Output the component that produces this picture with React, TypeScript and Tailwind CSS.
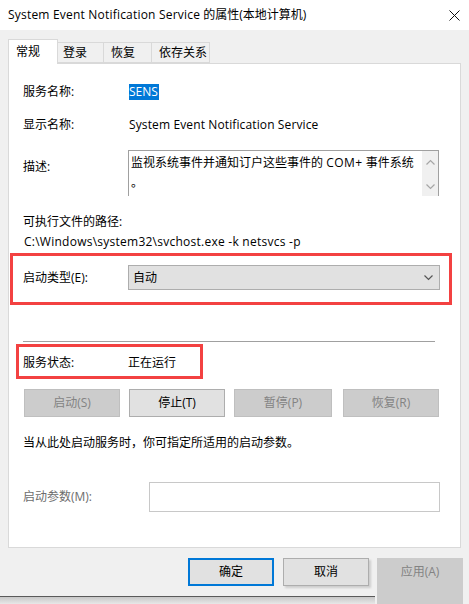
import React from "react";

const font = "font-['Open_Sans','Noto_Sans_CJK_SC',sans-serif]";

function Chevron({ up }: { up?: boolean }) {
  return (
    <svg width="9" height="6" viewBox="0 0 9 6" className="block">
      <path d={up ? "M0.5 5.5 L4.5 1.5 L8.5 5.5" : "M0.5 0.5 L4.5 4.5 L8.5 0.5"} fill="none" stroke="currentColor" strokeWidth="1.2" />
    </svg>
  );
}

function ServiceButton({ label, enabled, className }: { label: string; enabled?: boolean; className: string }) {
  return (
    <div
      className={
        "flex h-[28px] items-center justify-center border text-[12px] " +
        (enabled ? "border-[#adadad] bg-[#e1e1e1] text-black " : "border-[#bfbfbf] bg-[#cccccc] text-[#838383] ") +
        className
      }
    >
      {label}
    </div>
  );
}

export default function App() {
  return (
    <div className={`relative h-[604px] w-[469px] overflow-hidden bg-[#f0f0f0] text-[12px] leading-[16px] text-black ${font}`}>
      {/* title bar */}
      <div className="flex h-[30px] items-center justify-between bg-white pl-[8px] pr-[9px]">
        <span className="text-[12px]">
          <span className="tracking-[0.2px]">System Event Notification Service</span> 的属性(本地计算机)
        </span>
        <svg width="11" height="11" viewBox="0 0 11 11">
          <path d="M0.5 0.5 L10.5 10.5 M10.5 0.5 L0.5 10.5" stroke="#111" strokeWidth="1" />
        </svg>
      </div>

      {/* tabs */}
      <div className="mt-[9px] flex items-end pl-[8px]">
        <div className="relative z-10 -mb-px flex h-[25px] w-[50px] items-start border border-b-0 border-[#d9d9d9] bg-white pl-[7px] pt-[4px]">常规</div>
        <div className="flex h-[21px] w-[46px] items-center border border-l-0 border-[#d9d9d9] bg-[#f0f0f0] pl-[5px]">登录</div>
        <div className="flex h-[21px] w-[48px] items-center border border-l-0 border-[#d9d9d9] bg-[#f0f0f0] pl-[7px]">恢复</div>
        <div className="flex h-[21px] w-[58px] items-center border border-l-0 border-[#d9d9d9] bg-[#f0f0f0] pl-[7px]">依存关系</div>
      </div>

      {/* panel */}
      <div className="ml-[8px] flex h-[485px] w-[453px] flex-col border border-[#d9d9d9] bg-white pl-[14px]">
        <div className="mt-[20px] flex h-[16px] items-center">
          <span className="w-[106px]">服务名称:</span>
          <span className="bg-[#0078d7] pr-[1px] text-white">SENS</span>
        </div>
        <div className="mt-[17px] flex h-[16px] items-center">
          <span className="w-[106px]">显示名称:</span>
          <span className="tracking-[0.12px]">System Event Notification Service</span>
        </div>
        <div className="mt-[17px] flex">
          <span className="w-[105px] pt-[9px]">描述:</span>
          <div className="flex h-[46px] w-[311px] border border-[#a0a0a0] border-b-0">
            <div className="flex-1 pl-[2px] pt-[2px] leading-[20px]">
              监视系统事件并通知订户这些事件的 <span className="tracking-[0.5px]">COM+</span> 事件系统
              <br />。
            </div>
            <div className="flex w-[16px] flex-col items-center justify-between bg-[#f0f0f0] pb-[6px] pt-[8px] text-[#a6a6a6]">
              <Chevron up />
              <Chevron />
            </div>
          </div>
        </div>
        <div className="mt-[18px] h-[16px]">可执行文件的路径:</div>
        <div className="mt-[4px] h-[16px] pl-[1px] tracking-[0.25px]">C:\Windows\system32\svchost.exe -k netsvcs -p</div>

        <div className="-ml-[13px] mt-[3px] flex h-[52px] w-[442px] items-start border-[3px] border-[#f34141] pl-[10px] pt-[9px]">
          <span className="w-[105px] pt-[5px]">启动类型(E):</span>
          <div className="flex h-[25px] w-[312px] items-center justify-between border border-[#adadad] bg-[#e1e1e1] pl-[4px] pr-[6px]">
            <span>自动</span>
            <span className="text-[#555]">
              <Chevron />
            </span>
          </div>
        </div>

        <div className="mt-[36px] h-px w-[412px] bg-[#a0a0a0]" />

        <div className="-ml-[7px] mt-[2px] flex h-[35px] w-[187px] items-center border-[3px] border-[#f34141] pl-[4px] pt-[3px]">
          <span className="w-[105px]">服务状态:</span>
          <span>正在运行</span>
        </div>

        <div className="mt-[10px] flex">
          <ServiceButton label="启动(S)" className="ml-[1px] w-[96px]" />
          <ServiceButton label="停止(T)" enabled className="ml-[9px] w-[96px]" />
          <ServiceButton label="暂停(P)" className="ml-[9px] w-[98px]" />
          <ServiceButton label="恢复(R)" className="ml-[11px] w-[96px]" />
        </div>

        <div className="mt-[18px] h-[16px]">当从此处启动服务时，你可指定所适用的启动参数。</div>

        <div className="mt-[31px] flex items-center">
          <span className="w-[126px] text-[#6d6d6d]">启动参数(M):</span>
          <div className="h-[30px] w-[291px] border border-[#c8c8c8] bg-white" />
        </div>
      </div>

      {/* bottom buttons */}
      <div className="mt-[10px] flex">
        <div className="flex w-[377px] flex-col">
          <div className="flex pl-[188px]">
            <div className="flex h-[28px] w-[86px] items-center justify-center border-2 border-[#0078d7] bg-[#e1e1e1]">确定</div>
            <div className="ml-[9px] flex h-[28px] w-[86px] items-center justify-center border border-[#adadad] bg-[#e1e1e1] shadow-[2px_2px_2px_rgba(0,0,0,0.15)]">取消</div>
          </div>
          <div className="mt-[10px] h-px w-[375px] bg-[#5a5a5a]" />
          <div className="h-[8px] w-[375px] bg-gradient-to-b from-[#c8c8c8] to-[#ececec]" />
        </div>
        <div className="flex h-[46px] w-[86px] items-start justify-center bg-[#cccccc] pt-[6px] text-[#838383]">应用(A)</div>
      </div>
    </div>
  );
}
